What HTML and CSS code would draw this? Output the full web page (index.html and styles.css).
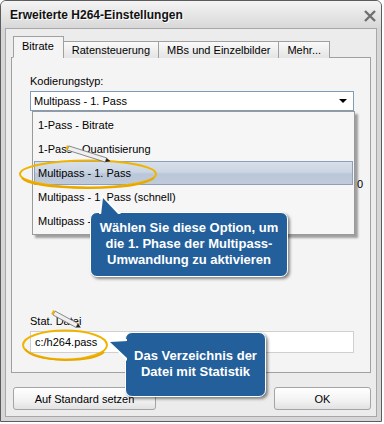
FILE: index.html
```html
<!DOCTYPE html>
<html>
<head>
    <title>Erweiterte H264-Einstellungen</title>
    <link rel="stylesheet" href="styles.css">
</head>
<body>
    <div class="window">
        <div class="titlebar">
            <span class="title">Erweiterte H264-Einstellungen</span>
            <svg class="close" width="14" height="14" viewBox="0 0 14 14"><path d="M2 2L12 12M12 2L2 12" stroke="#707070" stroke-width="2.4"/></svg>
        </div>
        <div class="client">
            <div class="tabs">
                <div class="tab active">Bitrate</div>
                <div class="tab">Ratensteuerung</div>
                <div class="tab">MBs und Einzelbilder</div>
                <div class="tab">Mehr...</div>
            </div>
            <div class="panel">
                <div class="label">Kodierungstyp:</div>
                <div class="combo"><span>Multipass - 1. Pass</span><span class="arrow"></span></div>
                <div class="under">0</div>
                <div class="label stat">Stat. Datei</div>
                <div class="textbox">c:/h264.pass</div>
            </div>
            <div class="buttons">
                <button class="btn">Auf Standard setzen</button>
                <button class="btn ok">OK</button>
            </div>
        </div>
    </div>

    <!-- aufgeklappte Liste -->
    <div class="dropdown">
        <div class="item">1-Pass - Bitrate</div>
        <div class="item">1-Pass - Quantisierung</div>
        <div class="item selected">Multipass - 1. Pass</div>
        <div class="item">Multipass - 1. Pass (schnell)</div>
        <div class="item">Multipass - 2. Pass</div>
    </div>

    <!-- Markierungen -->
    <svg class="marks" width="384" height="424" viewBox="0 0 384 424">
        <ellipse cx="88" cy="174" rx="68" ry="13.5" fill="none" stroke="#f0b400" stroke-width="2"/>
        <path d="M22 178 Q30 187 88 188 Q140 188 154 178" fill="none" stroke="#e8a800" stroke-width="2"/>
        <ellipse cx="65" cy="345" rx="42" ry="14.5" fill="none" stroke="#f0b400" stroke-width="2"/>
        <path d="M25 349 Q32 359 65 360 Q95 360 104 352" fill="none" stroke="#e8a800" stroke-width="2"/>

        <g class="pen">
            <path d="M68.7 145.9 L106.7 157.9 L105.3 162.1 L67.3 150.1 Z" fill="#efefef" stroke="#6c6c6c" stroke-width="0.8"/>
            <path d="M106.7 157.9 L110.5 161.3 L105.3 162.1 Z" fill="#222"/>
            <path d="M66.8 145.3 L68.7 145.9 L67.3 150.1 L65.4 149.5 Z" fill="#f0b400"/>
        </g>
        <g class="pen">
            <path d="M55.05 311.07 L78.05 323.57 L75.95 327.43 L52.95 314.93 Z" fill="#efefef" stroke="#6c6c6c" stroke-width="0.8"/>
            <path d="M78.05 323.57 L80.8 327.6 L75.95 327.43 Z" fill="#222"/>
            <path d="M53.3 310.1 L55.05 311.07 L52.95 314.93 L51.2 313.98 Z" fill="#f0b400"/>
        </g>
    </svg>

    <div class="callout tip-up">
        Wählen Sie diese Option, um<br>
        die 1. Phase der Multipass-<br>
        Umwandlung zu aktivieren
    </div>
    <div class="callout tip-left">
        Das Verzeichnis der<br>
        Datei mit Statistik
    </div>
</body>
</html>
```

FILE: styles.css
```css
body { margin: 0; background: #fff; font-family: "Liberation Sans", Arial, sans-serif; font-size: 11px; color: #000; }

.window { width: 372px; height: 416px; border: 1px solid #5c5c5c; border-radius: 6px 6px 0 0; padding: 0 4px 4px 4px; background: #d6d6d6; display: flex; flex-direction: column; }
.titlebar { flex-shrink: 0; height: 27px; display: flex; align-items: center; justify-content: space-between; background: linear-gradient(#f4f4f4, #d8d8d8); margin: 0 -4px; padding: 0 4px 0 9px; border-radius: 5px 5px 0 0; }
.title { font-weight: bold; font-size: 12px; color: #111; text-shadow: 1px 1px 0 #fff; }
.close { margin-top: 2px; }

.client { flex: 1; background: #ececec; border: 1px solid #a8a8a8; padding: 7px 5px 0 5px; display: flex; flex-direction: column; }

.tabs { flex-shrink: 0; display: flex; align-items: flex-end; padding-left: 2px; margin-bottom: -1px; position: relative; z-index: 1; }
.tab { height: 16px; line-height: 16px; padding: 0 8px; border: 1px solid #a0a0a0; border-bottom: none; background: linear-gradient(#fafafa, #e4e4e4); margin-left: -1px; }
.tab.active { height: 20px; line-height: 19px; background: #f4f4f4; margin-left: 0; padding: 0 9px 0 8px; border-bottom: 1px solid #f4f4f4; }

.panel { flex-shrink: 0; height: 297px; background: #f4f4f4; border: 1px solid #a0a0a0; padding: 17px 0 0 18px; display: flex; flex-direction: column; }
.label { line-height: 13px; margin-bottom: 2px; }
.combo { width: 313px; height: 18px; border: 1px solid #7f9db9; background: #fff; display: flex; align-items: center; justify-content: space-between; padding: 0 6px 0 3px; margin-top: 1px; }
.arrow { width: 0; height: 0; border-left: 4px solid transparent; border-right: 4px solid transparent; border-top: 4px solid #000; }
.under { margin-top: 66px; text-align: right; padding-right: 7px; line-height: 14px; }
.stat { margin-top: 124px; margin-bottom: 3px; }
.textbox { width: 318px; height: 20px; border: 1px solid #d0d0d0; background: #fff; line-height: 20px; padding-left: 4px; }

.buttons { flex-shrink: 0; display: flex; justify-content: space-between; margin-top: 14px; padding: 0 0 0 2px; }
.btn { width: 143px; height: 23px; font-family: "Liberation Sans", Arial, sans-serif; font-size: 11px; color: #000; border: 1px solid #a4a4a4; border-radius: 3px; background: linear-gradient(#ffffff, #f2f2f2 60%, #e2e2e2); padding: 0; }
.btn.ok { width: 97px; }

.dropdown { position: absolute; left: 32px; top: 111px; width: 321px; height: 120px; border: 1px solid #9a9a9a; background: #f6f6f6; box-shadow: 3px 3px 2px rgba(0, 0, 0, 0.35); padding: 1px 0; }
.item { height: 24px; line-height: 24px; padding-left: 5px; }
.item.selected { margin: 0 1px; height: 22px; line-height: 22px; padding-left: 3px; border: 1px solid #8e9fba; background: linear-gradient(#d6dfea, #ccd6e3 45%, #bac7d8 55%, #bfcbdb); }

.marks { position: absolute; left: 0; top: 0; }

.callout { position: absolute; background: #235f9b; color: #fff; border: 1.5px solid #fff; border-radius: 7px; box-shadow: 2px 2px 3px rgba(0, 0, 0, 0.45); font-weight: bold; font-size: 13px; line-height: 16px; text-align: center; box-sizing: border-box; }
.callout::before, .callout::after { content: ""; position: absolute; }
.tip-up { left: 90px; top: 212px; width: 198px; height: 65px; padding-top: 7px; }
.tip-up::before { left: 8px; top: -18px; width: 22px; height: 19px; background: #fff; clip-path: polygon(3px 0, 0 100%, 100% 100%); }
.tip-up::after { left: 10px; top: -15px; width: 18px; height: 17px; background: #235f9b; clip-path: polygon(2px 0, 0 100%, 100% 100%); }
.tip-left { left: 125px; top: 332px; width: 141px; height: 65px; padding-top: 15px; }
.tip-left::before { left: -19px; top: 6px; width: 20px; height: 22px; background: #fff; clip-path: polygon(0 2px, 100% 0, 100% 100%); }
.tip-left::after { left: -16px; top: 8px; width: 18px; height: 18px; background: #235f9b; clip-path: polygon(0 1px, 100% 0, 100% 100%); }
```
